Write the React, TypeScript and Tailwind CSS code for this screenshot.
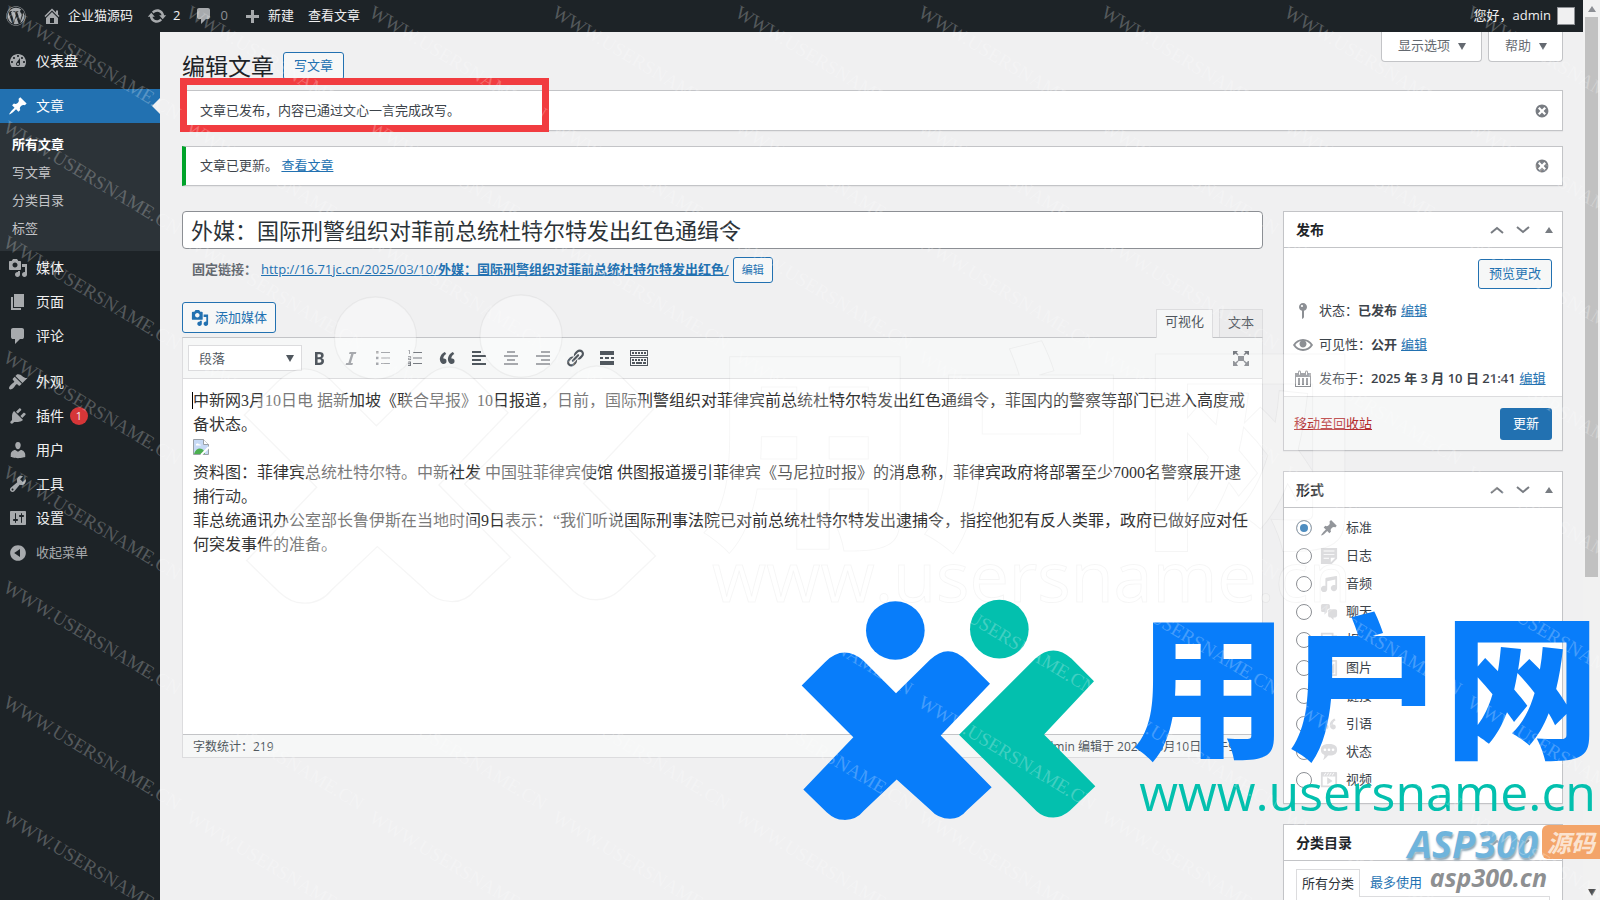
import { useState } from "react";
import type { ReactNode } from "react";
import { FaWordpress } from "react-icons/fa";

const icons = {
  dashboard:
    "M3.76 16h12.48c1.1-1.37 1.76-3.11 1.76-5 0-4.42-3.58-8-8-8s-8 3.58-8 8c0 1.89.66 3.63 1.76 5zM10 4c.55 0 1 .45 1 1s-.45 1-1 1-1-.45-1-1 .45-1 1-1zM6 6c.55 0 1 .45 1 1s-.45 1-1 1-1-.45-1-1 .45-1 1-1zm8 0c.55 0 1 .45 1 1s-.45 1-1 1-1-.45-1-1 .45-1 1-1zm-5.37 5.55L12 7v6c0 1.1-.9 2-2 2s-2-.9-2-2c0-.57.24-1.08.63-1.45zM4 10c.55 0 1 .45 1 1s-.45 1-1 1-1-.45-1-1 .45-1 1-1zm12 0c.55 0 1 .45 1 1s-.45 1-1 1-1-.45-1-1 .45-1 1-1zm-5 3c0-.55-.45-1-1-1s-1 .45-1 1 .45 1 1 1 1-.45 1-1z",
  post: "M10.44 3.02l1.82-1.82 6.36 6.35-1.83 1.82c-1.05-.68-2.48-.57-3.41.36l-.75.75c-.92.93-1.04 2.35-.35 3.41l-1.83 1.82-2.41-2.41-2.8 2.79c-.42.42-3.38 2.71-3.8 2.29s1.86-3.39 2.28-3.81l2.79-2.79L4.1 9.36l1.83-1.82c1.05.69 2.48.57 3.4-.36l.75-.75c.93-.92 1.05-2.35.36-3.41z",
  media:
    "M13 11V4c0-.55-.45-1-1-1h-1.67L9 1H5L3.67 3H2c-.55 0-1 .45-1 1v7c0 .55.45 1 1 1h10c.55 0 1-.45 1-1zM7 4.5c1.38 0 2.5 1.12 2.5 2.5S8.38 9.5 7 9.5 4.5 8.38 4.5 7 5.62 4.5 7 4.5zM14 6h5v10.5c0 1.38-1.12 2.5-2.5 2.5S14 17.88 14 16.5s1.12-2.5 2.5-2.5c.17 0 .34.02.5.05V9h-3V6zm-4 8.05V13h2v3.5c0 1.38-1.12 2.5-2.5 2.5S7 17.88 7 16.5 8.12 14 9.5 14c.17 0 .34.02.5.05z",
  page: "M6 15V2h10v13H6zm-1 1h8v2H3V5h2v11z",
  comments:
    "M5 2h9q.82 0 1.41.59T16 4v7q0 .82-.59 1.41T14 13h-2l-5 5v-5H5q-.82 0-1.41-.59T3 11V4q0-.82.59-1.41T5 2z",
  appearance:
    "M14.48 11.06L7.41 3.99l1.5-1.5c.5-.56 2.3-.47 3.51.32 1.21.8 1.43 1.28 2.91 2.1 1.18.64 2.45 1.26 4.45.85zm-.71.71L6.7 4.7 4.93 6.47c-.39.39-.39 1.02 0 1.41l1.06 1.06c.39.39.39 1.03 0 1.42-.6.6-1.43 1.11-2.21 1.69-.35.26-.7.53-1.01.84C1.43 14.23.4 16.08 1.4 17.07c.99 1 2.84-.03 4.18-1.36.31-.31.58-.66.85-1.02.57-.78 1.08-1.61 1.69-2.21.39-.39 1.02-.39 1.41 0l1.06 1.06c.39.39 1.02.39 1.41 0z",
  plugins:
    "M13.11 4.36L9.87 7.6 8 5.73l3.24-3.24c.35-.34 1.05-.2 1.56.32.52.51.66 1.21.31 1.55zm-8 1.77l.91-1.12 9.01 9.01-1.19.84c-.71.71-2.63 1.16-3.82 1.16H6.14L4.9 17.26c-.59.59-1.54.59-2.12 0-.59-.58-.59-1.53 0-2.12l1.24-1.24v-3.88c0-1.13.4-3.19 1.09-3.89zm7.26 3.97l3.24-3.24c.34-.35 1.04-.21 1.55.31.52.51.66 1.21.31 1.55l-3.24 3.25z",
  users:
    "M10 9.25c-2.27 0-2.73-3.44-2.73-3.44C7 4.02 7.82 2 9.97 2c2.16 0 2.98 2.02 2.71 3.81 0 0-.41 3.44-2.68 3.44zm0 2.57L12.72 10c2.39 0 4.52 2.33 4.52 4.53v2.49s-3.65 1.13-7.24 1.13c-3.65 0-7.24-1.13-7.24-1.13v-2.49c0-2.25 1.94-4.48 4.47-4.48z",
  tools:
    "M16.68 9.77c-1.34 1.34-3.3 1.67-4.95.99l-5.41 6.52c-.99.99-2.59.99-3.58 0s-.99-2.59 0-3.57l6.52-5.42c-.68-1.65-.35-3.61.99-4.95 1.28-1.28 3.12-1.62 4.72-1.06l-2.89 2.89 2.82 2.82 2.86-2.87c.53 1.58.18 3.39-1.08 4.65zM3.81 16.21c.4.39 1.04.39 1.43 0 .4-.4.4-1.04 0-1.43-.39-.4-1.03-.4-1.43 0-.39.39-.39 1.03 0 1.43z",
  settings:
    "M18 16V4c0-.55-.45-1-1-1H3c-.55 0-1 .45-1 1v12c0 .55.45 1 1 1h14c.55 0 1-.45 1-1zM8 11h1c.55 0 1 .45 1 1s-.45 1-1 1H8v1.5c0 .28-.22.5-.5.5s-.5-.22-.5-.5V13H6c-.55 0-1-.45-1-1s.45-1 1-1h1V5.5c0-.28.22-.5.5-.5s.5.22.5.5V11zm5-2h-1c-.55 0-1-.45-1-1s.45-1 1-1h1V5.5c0-.28.22-.5.5-.5s.5.22.5.5V7h1c.55 0 1 .45 1 1s-.45 1-1 1h-1v5.5c0 .28-.22.5-.5.5s-.5-.22-.5-.5V9z",
  collapse:
    "M10 2.16c4.33 0 7.84 3.51 7.84 7.84s-3.51 7.84-7.84 7.84S2.16 14.33 2.16 10 5.71 2.16 10 2.16zm2 11.72V6.12L6.18 9.97z",
  home: "M16 8.5l1.53 1.53-1.06 1.06L10 4.6l-6.47 6.49-1.06-1.06L10 2.5l4 4v-2h2v4zm-6-2.46l6 5.99V18H4v-5.97zM12 17v-5H8v5h4z",
  update:
    "M10.2 3.28c3.53 0 6.43 2.61 6.92 6h2.08l-3.5 4-3.5-4h2.32c-.45-1.97-2.21-3.45-4.32-3.45-1.45 0-2.73.71-3.54 1.78L4.95 5.66C6.23 4.2 8.11 3.28 10.2 3.28zm-.4 13.44c-3.52 0-6.43-2.61-6.92-6H.8l3.5-4c1.17 1.33 2.33 2.67 3.5 4H5.48c.45 1.97 2.21 3.45 4.32 3.45 1.45 0 2.73-.71 3.54-1.78l1.71 1.95c-1.28 1.46-3.15 2.38-5.25 2.38z",
  plus: "M17 9v3h-5v5H9v-5H4V9h5V4h3v5h5z",
  dismiss:
    "M10 2c4.42 0 8 3.58 8 8s-3.58 8-8 8-8-3.58-8-8 3.58-8 8-8zm5 11l-3-3 3-3-2-2-3 3-3-3-2 2 3 3-3 3 2 2 3-3 3 3z",
  pin: "M14 6c0 1.86-1.28 3.41-3 3.86V16c0 1-2 2-2 2V9.86c-1.72-.45-3-2-3-3.86 0-2.21 1.79-4 4-4s4 1.79 4 4zM8 5c0 .55.45 1 1 1s1-.45 1-1-.45-1-1-1-1 .45-1 1z",
  eye: "M19.7 9.4C17.7 6 14 3.9 10 3.9S2.3 6 .3 9.4L0 10l.3.6c2 3.4 5.7 5.5 9.7 5.5s7.7-2.1 9.7-5.5l.3-.6-.3-.6zM10 14.1c-3.1 0-6-1.6-7.7-4.1C3.6 8 5.7 6.6 8 6.1c-.9.6-1.5 1.7-1.5 2.9 0 1.9 1.6 3.5 3.5 3.5s3.5-1.6 3.5-3.5c0-1.2-.6-2.3-1.5-2.9 2.3.5 4.4 1.9 5.7 3.9-1.7 2.5-4.6 4.1-7.7 4.1z",
  calendar:
    "M15 4h3v14H2V4h3V3c0-.83.67-1.5 1.5-1.5S8 2.17 8 3v1h4V3c0-.83.67-1.5 1.5-1.5S15 2.17 15 3v1zM6 3v2.5c0 .28.22.5.5.5s.5-.22.5-.5V3c0-.28-.22-.5-.5-.5S6 2.72 6 3zm7 0v2.5c0 .28.22.5.5.5s.5-.22.5-.5V3c0-.28-.22-.5-.5-.5s-.5.22-.5.5zm4 14V8H3v9h14zM7 16V9H5v7h2zm4 0V9H9v7h2zm4 0V9h-2v7h2z",
  bold: "M6 4v13h4.54c1.37 0 2.46-.33 3.26-1 .8-.66 1.2-1.58 1.2-2.77 0-.84-.17-1.51-.51-2.01s-.9-.85-1.67-1.03v-.09c.57-.1 1.02-.4 1.36-.9s.51-1.13.51-1.91c0-1.14-.39-1.98-1.17-2.5C12.75 4.26 11.5 4 9.78 4H6zm2.57 5.15V6.26h1.36c.73 0 1.27.11 1.61.32.34.22.51.58.51 1.07 0 .54-.16.92-.47 1.15s-.82.35-1.51.35h-1.5zm0 2.19h1.6c1.44 0 2.16.53 2.16 1.61 0 .6-.17 1.05-.51 1.34s-.86.43-1.57.43H8.57v-3.38z",
  italic: "M14.78 6h-2.13l-2.8 9h2.12l-.62 2H4.6l.62-2h2.14l2.8-9H8.03l.62-2h6.75z",
  ul: "M3 3h2.5v2.5H3zM3 8.8h2.5v2.5H3zM3 14.5h2.5V17H3zM8 4h9v1H8zM8 9.5h9v1H8zM8 15h9v1H8z",
  ol: "M4 2h1v4H4V3H3zM3 8h3v2.5H4V11h2v1H3V9.8h2V9H3zM3 13.500h3V18H3v-1h2v-.8H3v-1h2v-.7H3zM8 4h9v1H8zM8 9.500h9v1H8zM8 15h9v1H8z",
  quote:
    "M9.49 13.22c0-.74-.2-1.38-.61-1.9-.62-.78-1.83-.88-2.53-.72-.29-1.65 1.11-3.75 2.92-4.65L7.88 4c-2.73 1.3-5.42 4.28-4.96 8.05C3.21 14.43 4.59 16 6.54 16c.85 0 1.56-.25 2.12-.75s.83-1.18.83-2.03zm8.05 0c0-.74-.2-1.38-.61-1.9-.63-.78-1.83-.88-2.53-.72-.29-1.65 1.11-3.75 2.92-4.65L15.93 4c-2.73 1.3-5.41 4.28-4.95 8.05.29 2.38 1.66 3.95 3.61 3.95.85 0 1.56-.25 2.12-.75s.83-1.18.83-2.03z",
  left: "M12 5V3H3v2h9zm5 4V7H3v2h14zm-5 4v-2H3v2h9zm5 4v-2H3v2h14z",
  center: "M14 5V3H6v2h8zm3 4V7H3v2h14zm-3 4v-2H6v2h8zm3 4v-2H3v2h14z",
  right: "M17 5V3H8v2h9zm0 4V7H3v2h14zm0 4v-2H8v2h9zm0 4v-2H3v2h14z",
  link: "M17.74 2.76c1.68 1.69 1.68 4.41 0 6.1l-1.53 1.52c-1.12 1.12-2.7 1.47-4.14 1.09l2.62-2.61.76-.77.76-.76c.84-.84.84-2.2 0-3.04-.84-.85-2.2-.85-3.04 0l-.77.76-3.38 3.38c-.37-1.44-.02-3.02 1.1-4.14l1.52-1.53c1.69-1.68 4.42-1.68 6.1 0zM8.59 13.43l5.34-5.34c.42-.42.42-1.1 0-1.52-.44-.43-1.13-.39-1.53 0l-5.33 5.34c-.42.42-.42 1.1 0 1.52.44.43 1.13.39 1.52 0zm-.76 2.29l4.14-4.15c.38 1.44.03 3.02-1.09 4.14l-1.52 1.53c-1.69 1.68-4.41 1.68-6.1 0-1.68-1.68-1.68-4.42 0-6.1l1.53-1.52c1.12-1.12 2.7-1.47 4.14-1.1l-4.14 4.15c-.85.84-.85 2.2 0 3.05.84.84 2.2.84 3.04 0z",
  more: "M17 7V3H3v4h14zM6 11V9H3v2h3zm6 0V9H8v2h4zm5 0V9h-3v2h3zm0 6v-4H3v4h14z",
  kitchen:
    "M1 2h18v6H1zM2 3v4h16V3zM1 9h18v9H1zM2 10v7h16v-7zM3 4h2v2H3zM6 4h2v2H6zM9 4h2v2H9zM12 4h2v2h-2zM15 4h2v2h-2zM3 11h2v2H3zM6 11h2v2H6zM9 11h2v2H9zM12 11h2v2h-2zM15 11h2v2h-2zM3 14h3v2H3zM7 14h6v2H7zM14 14h3v2h-3z",
  expand:
    "M7 8h6v5H7zM2 3h5L5.500 4.500l2 2-1 1-2-2L3 7H2zM18 3v4h-1l-1.500-1.500-2 2-1-1 2-2L13 3zM2 18v-5h1l1.500 1.500 2-2 1 1-2 2L7 18zM18 18h-5l1.500-2.500-2-2 1-1 2 2L17 13h1z",
  aside: "M1 1h18v12l-6 6H1V1zm3 3v1h12V4H4zm0 4v1h12V8H4zm6 5v-1H4v1h6zm2 4l5-5h-5v5z",
  audio:
    "M6.99 3.08l11.02-2c.55-.08.99.45.99 1V14.5c0 1.94-1.57 3.5-3.5 3.5S12 16.44 12 14.5c0-1.93 1.57-3.5 3.5-3.5.54 0 1.04.14 1.5.35V5.08l-9 2V16c-.24 1.7-1.74 3-3.5 3C2.57 19 1 17.44 1 15.5 1 13.57 2.57 12 4.5 12c.54 0 1.04.14 1.5.35V4.08c0-.55.44-.91.99-1z",
  chat: "M11 6h-.82C9.07 6 8 7.2 8 8.16V10l-3 3v-3H3c-1.1 0-2-.9-2-2V3c0-1.1.9-2 2-2h6c1.1 0 2 .9 2 2v3zm0 1h6c1.1 0 2 .9 2 2v5c0 1.1-.9 2-2 2h-2v3l-3-3h-1c-1.1 0-2-.9-2-2V9c0-1.1.9-2 2-2z",
  gallery:
    "M1 2h14v3h4v13H6v-3H1zM3 4v9h10V4zM15 7v8H8v1h9V7zM5 6h2v2H5zM4 12V9l2 1 3-3 3 3v2z",
  image:
    "M2.25 1h15.5c.69 0 1.25.56 1.25 1.25v15.5c0 .69-.56 1.25-1.25 1.25H2.25C1.56 19 1 18.44 1 17.75V2.25C1 1.56 1.56 1 2.25 1zM17 17V3H3v14h14zM10 6c0-1.1-.9-2-2-2s-2 .9-2 2 .9 2 2 2 2-.9 2-2zm3 5s0-6 3-6v10c0 .55-.45 1-1 1H5c-.55 0-1-.45-1-1V8c2 0 3 4 3 4s1-3 3-3 3 2 3 2z",
  status:
    "M10 1c7 0 9 2.91 9 6.5S17 14 10 14c-.38 0-.74-.01-1.09-.03C7.66 15.81 5.63 18 3 19c1.36-1.36 1.9-3.7 1.9-5.75C2 12.24 1 10.28 1 7.5 1 3.91 3 1 10 1zM5.5 9C6.33 9 7 8.33 7 7.5S6.33 6 5.5 6 4 6.67 4 7.5 4.67 9 5.5 9zM10 9c.83 0 1.5-.67 1.5-1.5S10.83 6 10 6s-1.5.67-1.5 1.5S9.17 9 10 9zm4.5 0c.83 0 1.5-.67 1.5-1.5S15.33 6 14.5 6 13 6.67 13 7.5 13.67 9 14.5 9z",
  video:
    "M2 1h16c.55 0 1 .45 1 1v16l-18-.02V2c0-.55.45-1 1-1zm4 1L4 5h1l2-3H6zm4 0H9L7 5h1zm3 0h-1l-2 3h1zm3 0h-1l-2 3h1zm1 14V6H3v10h14zM8 7l6 4-6 4V7z",
};

type IconName = keyof typeof icons;

function Icon({ name, className = "size-5" }: { name: IconName; className?: string }) {
  return (
    <svg viewBox="0 0 20 20" fill="currentColor" fillRule="evenodd" className={`shrink-0 ${className}`} aria-hidden="true">
      <path d={icons[name]} />
    </svg>
  );
}

function Triangle({ up = false }: { up?: boolean }) {
  return (
    <svg viewBox="0 0 8 8" className="size-2 shrink-0" fill="currentColor" aria-hidden="true">
      <path d={up ? "M4 1l4 6H0z" : "M0 1h8L4 8z"} />
    </svg>
  );
}

/* ---------- admin bar ---------- */

function AdminBar() {
  return (
    <header className="flex h-8 shrink-0 items-center justify-between bg-[#1d2327] pl-1.5 pr-2 text-[13px] text-[#f0f0f1]">
      <nav className="flex items-center">
        <a href="#" aria-label="WordPress" className="mr-4 text-[#a7aaad]">
          <FaWordpress className="size-5" />
        </a>
        <a href="#" className="mr-3.5 flex items-center gap-1.5">
          <Icon name="home" className="size-5 text-[#a7aaad]" />
          企业猫源码
        </a>
        <a href="#" className="mr-3.5 flex items-center gap-1.5">
          <Icon name="update" className="size-5 text-[#a7aaad]" />2
        </a>
        <a href="#" className="mr-3.5 flex items-center gap-1.5 text-[#a7aaad]">
          <Icon name="comments" className="size-5" />
          <span className="text-[#8c8f94]">0</span>
        </a>
        <a href="#" className="mr-3.5 flex items-center gap-1.5">
          <Icon name="plus" className="size-5 text-[#a7aaad]" />
          新建
        </a>
        <a href="#">查看文章</a>
      </nav>
      <a href="#" className="flex items-center gap-1.5">
        您好，admin
        <span className="size-[18px] border border-[#8c8f94] bg-[#f0f0f1]" />
      </a>
    </header>
  );
}

/* ---------- side menu ---------- */

const subMenu = ["所有文章", "写文章", "分类目录", "标签"];

const menuMiddle: { icon: IconName; label: string }[] = [
  { icon: "media", label: "媒体" },
  { icon: "page", label: "页面" },
  { icon: "comments", label: "评论" },
];

const menuBottom: { icon: IconName; label: string; count?: number }[] = [
  { icon: "appearance", label: "外观" },
  { icon: "plugins", label: "插件", count: 1 },
  { icon: "users", label: "用户" },
  { icon: "tools", label: "工具" },
  { icon: "settings", label: "设置" },
];

function MenuItem({ icon, label, count }: { icon: IconName; label: string; count?: number }) {
  return (
    <a href="#" className="flex h-[34px] items-center pl-2 text-sm text-[#f0f0f1]">
      <Icon name={icon} className="mr-2 size-5 text-[#a7aaad]" />
      {label}
      {count && (
        <span className="ml-1.5 flex size-[18px] items-center justify-center rounded-full bg-[#d63638] text-[11px]">
          {count}
        </span>
      )}
    </a>
  );
}

function SideMenu() {
  return (
    <nav className="w-40 shrink-0 bg-[#1d2327] pt-3">
      <MenuItem icon="dashboard" label="仪表盘" />
      <a
        href="#"
        className="relative mt-[11px] flex h-[34px] items-center gap-2 bg-[#2271b1] pl-2 text-sm text-white"
      >
        <Icon name="post" />
        文章
        <svg viewBox="0 0 8 16" className="absolute right-0 h-4 w-2" fill="#f0f0f1" aria-hidden="true">
          <path d="M8 0v16L0 8z" />
        </svg>
      </a>
      <ul className="bg-[#2c3338] py-2">
        {subMenu.map((label, i) => (
          <li key={label}>
            <a
              href="#"
              className={`flex h-7 items-center pl-3 text-[13px] ${i === 0 ? "font-bold text-white" : "text-[#c3c4c7]"}`}
            >
              {label}
            </a>
          </li>
        ))}
      </ul>
      {menuMiddle.map((item) => (
        <MenuItem key={item.label} {...item} />
      ))}
      <div className="h-3" />
      {menuBottom.map((item) => (
        <MenuItem key={item.label} {...item} />
      ))}
      <button className="flex h-9 items-center gap-2 pl-2 text-[13px] text-[#a7aaad]">
        <Icon name="collapse" />
        收起菜单
      </button>
    </nav>
  );
}

/* ---------- notices ---------- */

function Notice({ children, success = false }: { children: ReactNode; success?: boolean }) {
  return (
    <div
      className={`flex items-center justify-between border border-[#c3c4c7] bg-white pr-3 text-[13px] shadow-[0_1px_1px_rgba(0,0,0,0.04)] ${
        success ? "h-10 border-l-4 border-l-[#00a32a] pl-3.5" : "h-[41px] pl-[17px]"
      }`}
    >
      <p>{children}</p>
      <button aria-label="忽略此通知" className="text-[#787c82]">
        <Icon name="dismiss" className="size-4" />
      </button>
    </div>
  );
}

/* ---------- editor ---------- */

const tools: { icon: IconName; label: string; dim?: boolean }[] = [
  { icon: "bold", label: "粗体" },
  { icon: "italic", label: "斜体", dim: true },
  { icon: "ul", label: "项目符号列表", dim: true },
  { icon: "ol", label: "编号列表", dim: true },
  { icon: "quote", label: "段落引用" },
  { icon: "left", label: "左对齐" },
  { icon: "center", label: "居中对齐", dim: true },
  { icon: "right", label: "右对齐", dim: true },
  { icon: "link", label: "插入链接" },
  { icon: "more", label: "插入More标签" },
  { icon: "kitchen", label: "工具栏开关" },
];

function Editor() {
  return (
    <section>
      <div className="flex items-end justify-between">
        <button className="mb-1 flex h-[31px] items-center gap-1.5 rounded-[3px] border border-[#2271b1] bg-[#f6f7f7] px-2 text-[13px] text-[#2271b1]">
          <Icon name="media" className="size-[18px]" />
          添加媒体
        </button>
        <div className="flex gap-1.5 text-[13px] text-[#50575e]">
          <button className="relative z-10 -mb-px h-[29px] w-[57px] border border-b-0 border-[#dcdcde] bg-[#f6f7f7] pb-1">
            可视化
          </button>
          <button className="h-7 w-11 border border-b-0 border-[#dcdcde] bg-[#ebebec] pb-0.5">文本</button>
        </div>
      </div>
      <div className="border border-[#dcdcde] border-t-[#c3c4c7] bg-white">
        <div className="flex h-[41px] items-center border-b border-[#dcdcde] bg-[#f6f7f7] px-[5px] text-[#50575e]">
          <div className="relative mr-[5px]">
            <select
              aria-label="段落格式"
              className="h-[26px] w-[114px] appearance-none border border-[#dcdcde] bg-white pl-2.5 text-[13px]"
            >
              <option>段落</option>
            </select>
            <span className="pointer-events-none absolute right-2 top-[9px]">
              <Triangle />
            </span>
          </div>
          <div className="flex">
            {tools.map((tool) => (
              <button
                key={tool.icon}
                aria-label={tool.label}
                className={`flex h-7 w-8 items-center pl-0.5 ${tool.dim ? "text-[#787c82]" : ""}`}
              >
                <Icon name={tool.icon} />
              </button>
            ))}
          </div>
          <button aria-label="免打扰写作模式" className="ml-auto mr-1.5 text-[#787c82]">
            <Icon name="expand" />
          </button>
        </div>
        <article className="h-[355px] overflow-hidden px-2.5 pt-2.5 font-['Liberation_Serif','Noto_Sans_CJK_SC',serif] text-base leading-6 text-[#333]">
          <p>
            <span className="-ml-px border-l border-black" />
            中新网3月10日电 据新加坡《联合早报》10日报道，日前，国际刑警组织对菲律宾前总统杜特尔特发出红色通缉令，菲国内的警察等部门已进入高度戒备状态。
          </p>
          <BrokenImage />
          <p>
            资料图：菲律宾总统杜特尔特。中新社发 中国驻菲律宾使馆 供图报道援引菲律宾《马尼拉时报》的消息称，菲律宾政府将部署至少7000名警察展开逮捕行动。
          </p>
          <p>
            菲总统通讯办公室部长鲁伊斯在当地时间9日表示：“我们听说国际刑事法院已对前总统杜特尔特发出逮捕令，指控他犯有反人类罪，政府已做好应对任何突发事件的准备。
          </p>
        </article>
        <footer className="flex h-[23px] items-center justify-between border-t border-[#c3c4c7] bg-[#f6f7f7] px-2.5 pt-px text-xs text-[#50575e]">
          <span>字数统计：219</span>
          <span>最后由admin 编辑于 2025年3月10日 下午9:41</span>
        </footer>
      </div>
    </section>
  );
}

function BrokenImage() {
  return (
    <div className="flex h-6 items-start pt-0.5">
      <svg viewBox="0 0 16 16" className="size-4" aria-hidden="true">
        <path d="M.5.5h10l5 5v10H.5z" fill="#c6d9f5" stroke="#9aa0a6" />
        <path d="M10.500.5v5h5" fill="#fff" stroke="#9aa0a6" />
        <path d="M1 15c2-6 7-7 10-3l1 3z" fill="#4caf50" />
        <path d="M8 16l8-8" stroke="#fff" strokeWidth="2" />
        <path d="M3 6.500a1.500 1.500 0 013-1 1.500 1.500 0 012 1z" fill="#fff" />
      </svg>
    </div>
  );
}

/* ---------- meta boxes ---------- */

function MetaBox({ title, children }: { title: string; children: ReactNode }) {
  return (
    <section className="border border-[#c3c4c7] bg-white text-[13px] shadow-[0_1px_1px_rgba(0,0,0,0.04)]">
      <div className="flex h-9 items-center justify-between border-b border-[#c3c4c7] pl-3 pr-[9px]">
        <h2 className="text-sm font-bold text-[#1d2327]">{title}</h2>
        <div className="flex items-center gap-3 text-[#787c82]">
          <button aria-label="上移">
            <svg viewBox="0 0 14 8" className="h-2 w-3.5" fill="none" stroke="currentColor" strokeWidth="2">
              <path d="M1 7l6-5 6 5" />
            </svg>
          </button>
          <button aria-label="下移">
            <svg viewBox="0 0 14 8" className="h-2 w-3.5" fill="none" stroke="currentColor" strokeWidth="2">
              <path d="M1 1l6 5 6-5" />
            </svg>
          </button>
          <button aria-label="切换面板" className="pl-[3px]">
            <Triangle up />
          </button>
        </div>
      </div>
      {children}
    </section>
  );
}

const publishRows: { icon: IconName; label: string; value: string }[] = [
  { icon: "pin", label: "状态：", value: "已发布" },
  { icon: "eye", label: "可见性：", value: "公开" },
  { icon: "calendar", label: "发布于：", value: "2025 年 3 月 10 日 21:41" },
];

function PublishBox() {
  return (
    <MetaBox title="发布">
      <div className="flex justify-end px-2.5 pt-[11px]">
        <button className="h-[30px] rounded-[3px] border border-[#2271b1] bg-[#f6f7f7] px-2.5 text-[#2271b1]">
          预览更改
        </button>
      </div>
      <ul className="pl-[9px] pt-[5px]">
        {publishRows.map((row) => (
          <li key={row.label} className="flex h-[34px] items-center">
            <Icon name={row.icon} className="mr-1.5 size-5 text-[#8c8f94]" />
            <span>{row.label}</span>
            <b className="mr-1 font-semibold">{row.value}</b>
            <a href="#" className="text-[#2271b1] underline">
              编辑
            </a>
          </li>
        ))}
      </ul>
      <div className="flex h-[54px] items-center justify-between border-t border-[#dcdcde] bg-[#f6f7f7] px-2.5">
        <a href="#" className="text-[#b32d2e] underline">
          移动至回收站
        </a>
        <button className="h-8 rounded-[3px] bg-[#2271b1] px-[13px] text-white">更新</button>
      </div>
    </MetaBox>
  );
}

const formats: { icon: IconName; label: string }[] = [
  { icon: "post", label: "标准" },
  { icon: "aside", label: "日志" },
  { icon: "audio", label: "音频" },
  { icon: "chat", label: "聊天" },
  { icon: "gallery", label: "相册" },
  { icon: "image", label: "图片" },
  { icon: "link", label: "链接" },
  { icon: "quote", label: "引语" },
  { icon: "status", label: "状态" },
  { icon: "video", label: "视频" },
];

function FormatBox() {
  const [format, setFormat] = useState("标准");

  return (
    <MetaBox title="形式">
      <div className="px-3 pb-[9px] pt-1.5">
        {formats.map((item) => (
          <label key={item.label} className="flex h-7 items-center">
            <input
              type="radio"
              name="format"
              checked={format === item.label}
              onChange={() => setFormat(item.label)}
              className="size-4 appearance-none rounded-full border border-[#8c8f94] bg-white checked:bg-[#2271b1] checked:shadow-[inset_0_0_0_3px_white]"
            />
            <Icon
              name={item.icon}
              className={`ml-2 mr-2 size-[18px] ${format === item.label ? "text-[#787c82]" : "text-[#dcdcde]"}`}
            />
            {item.label}
          </label>
        ))}
      </div>
    </MetaBox>
  );
}

function CategoryBox() {
  return (
    <MetaBox title="分类目录">
      <div className="px-3 pt-2">
        <div className="flex">
          <button className="-mb-px h-7 border border-b-0 border-[#dcdcde] bg-white px-[5px] text-[#2c3338]">
            所有分类
          </button>
          <button className="px-2.5 text-[#2271b1]">最多使用</button>
        </div>
        <div className="h-40 border border-[#dcdcde]" />
      </div>
    </MetaBox>
  );
}

/* ---------- watermarks ---------- */

const BLUE_X =
  "M125 375L195 305Q250 250 310 300L408 398L510 298Q565 245 620 300L690 370L542 525L695 680L620 750Q600 775 570 775Q535 775 510 747L410 657L312 750Q288 780 250 778Q225 778 200 755L130 687L280 530Z";
const GREEN_ARROW =
  "M597 523L825 295Q880 245 935 295L1002 362L852 522L1006 677L930 750Q908 770 880 771Q850 771 830 752Z";

function Logo({ className, ghost = false }: { className: string; ghost?: boolean }) {
  const stroke = ghost ? "rgba(0,0,0,0.04)" : "none";
  const blue = ghost ? "rgba(255,255,255,0.35)" : "#087dfa";
  const green = ghost ? "rgba(255,255,255,0.35)" : "#03c0ae";
  return (
    <svg viewBox="120 110 900 680" className={className} stroke={stroke} strokeWidth="3" aria-hidden="true">
      <circle cx="406" cy="210" r="88" fill={blue} />
      <path d={BLUE_X} fill={blue} />
      <circle cx="718" cy="206" r="88" fill={green} />
      <path d={GREEN_ARROW} fill={green} />
    </svg>
  );
}

const tileRows = Array.from({ length: 9 }, (_, i) => i);
const tileCols = Array.from({ length: 9 }, (_, i) => i);

function Watermarks() {
  return (
    <div className="pointer-events-none absolute inset-0 z-20 overflow-hidden">
      <div className="absolute left-[242px] top-[291px]">
        <Logo ghost className="h-[318px] w-[420px]" />
      </div>
      <div className="absolute left-[700px] top-[325px] whitespace-nowrap font-['Noto_Sans_CJK_SC',sans-serif] text-[220px] font-black leading-[220px] text-white/20 [-webkit-text-stroke:1px_rgba(0,0,0,0.04)]">
        用户网
      </div>
      <div className="absolute left-[712px] top-[535px] font-['Open_Sans',sans-serif] text-[70px] leading-[80px] text-white/20 [-webkit-text-stroke:1px_rgba(0,0,0,0.04)]">
        www.usersname.cn
      </div>

      <div className="absolute left-[800px] top-[597px]">
        <Logo className="h-[227px] w-[300px]" />
      </div>
      <div className="absolute right-0 top-[600px] whitespace-nowrap font-['Noto_Sans_CJK_SC',sans-serif] text-[156px] font-black leading-[156px] text-[#087dfa]">
        用户网
      </div>
      <div className="absolute right-1 top-[762px] whitespace-nowrap font-['Open_Sans',sans-serif] text-[50px] leading-[60px] text-[#03c0ae]">
        www.usersname.cn
      </div>

      <div className="absolute right-[62px] top-[824px] font-['Open_Sans',sans-serif] text-[38px] font-bold italic leading-[38px] text-[#6fb4dc] [text-shadow:0_0_4px_white,1px_2px_2px_#5d7f95]">
        ASP300
      </div>
      <div className="absolute right-0 top-[825px] flex h-[34px] w-[58px] items-center justify-center rounded-l-md bg-[#f3a469] font-['Noto_Sans_CJK_SC',sans-serif] text-2xl font-bold italic text-[#fbe3d0]">
        源码
      </div>
      <div className="absolute right-[53px] top-[862px] font-['Open_Sans',sans-serif] text-[25px] font-bold italic leading-[30px] text-[#8e9092]">
        asp300.cn
      </div>

      <svg className="absolute inset-0 size-full" aria-hidden="true">
        {tileRows.map((row) =>
          tileCols.map((col) => (
            <text
              key={`${row}-${col}`}
              transform={`translate(${2 + col * 183} ${16 + row * 115}) rotate(31)`}
              className="fill-white/25 font-['Liberation_Serif',serif] text-[19px]"
            >
              WWW.USERSNAME.CN
            </text>
          )),
        )}
      </svg>
    </div>
  );
}

function Scrollbar() {
  return (
    <div className="flex w-[17px] shrink-0 flex-col items-center justify-between bg-[#f1f1f1] text-[#8c8f94]">
      <div className="flex h-[17px] items-center">
        <Triangle up />
      </div>
      <div className="mb-auto h-[560px] w-[13px] bg-[#c1c1c1]" />
      <div className="flex h-[17px] items-center text-[#505050]">
        <Triangle />
      </div>
    </div>
  );
}

export default function App() {
  return (
    <div className="relative flex h-screen overflow-hidden bg-[#f0f0f1] font-['Open_Sans','Noto_Sans_CJK_SC',sans-serif] text-[#3c434a]">
      <div className="flex min-w-0 flex-1 flex-col">
        <AdminBar />
        <div className="flex min-h-0 flex-1">
          <SideMenu />
          <main className="min-w-0 flex-1 overflow-hidden pl-[22px] pr-5">
            <div className="flex h-[58px] justify-between">
              <div className="flex items-center gap-[9px] pt-2.5">
                <h1 className="text-[23px] leading-8 text-[#1d2327]">编辑文章</h1>
                <a
                  href="#"
                  className="flex h-7 items-center rounded-[3px] border border-[#2271b1] bg-[#f6f7f7] px-2.5 text-[13px] text-[#2271b1]"
                >
                  写文章
                </a>
              </div>
              <div className="flex items-start gap-1.5 text-[13px] text-[#646970]">
                <button className="flex h-[30px] items-center gap-2 rounded-b border border-t-0 border-[#c3c4c7] bg-white pb-0.5 pl-4 pr-[15px]">
                  显示选项 <Triangle />
                </button>
                <button className="flex h-[30px] items-center gap-2 rounded-b border border-t-0 border-[#c3c4c7] bg-white pb-0.5 pl-4 pr-[15px]">
                  帮助 <Triangle />
                </button>
              </div>
            </div>

            <div className="relative">
              <Notice>文章已发布，内容已通过文心一言完成改写。</Notice>
              {/* highlight frame around the first notice */}
              <div className="absolute -left-0.5 -top-3 h-[54px] w-[369px] border-[7px] border-[#f13c40]" />
            </div>
            <div className="mt-[15px]">
              <Notice success>
                文章已更新。{" "}
                <a href="#" className="text-[#2271b1] underline">
                  查看文章
                </a>
              </Notice>
            </div>

            <div className="mt-[25px] flex gap-5">
              <div className="min-w-0 flex-1">
                <input
                  aria-label="标题"
                  defaultValue="外媒：国际刑警组织对菲前总统杜特尔特发出红色通缉令"
                  className="h-[38px] w-full rounded border border-[#8c8f94] bg-white px-2 pb-0.5 text-[22px] text-[#2c3338]"
                />
                <div className="mb-[19px] mt-2 flex h-[26px] items-center pl-2.5 text-[13px]">
                  <strong className="mr-1 font-semibold text-[#646970]">固定链接：</strong>
                  <a href="#" className="mr-1 text-[#2271b1] underline">
                    http://16.71jc.cn/2025/03/10/
                    <b className="font-semibold">外媒：国际刑警组织对菲前总统杜特尔特发出红色</b>/
                  </a>
                  <button className="h-[26px] rounded-[3px] border border-[#2271b1] bg-[#f6f7f7] px-2 text-[11px] text-[#2271b1]">
                    编辑
                  </button>
                </div>
                <Editor />
              </div>
              <aside className="flex w-[280px] shrink-0 flex-col gap-5">
                <PublishBox />
                <FormatBox />
                <CategoryBox />
              </aside>
            </div>
          </main>
        </div>
      </div>
      <Scrollbar />
      <Watermarks />
    </div>
  );
}
